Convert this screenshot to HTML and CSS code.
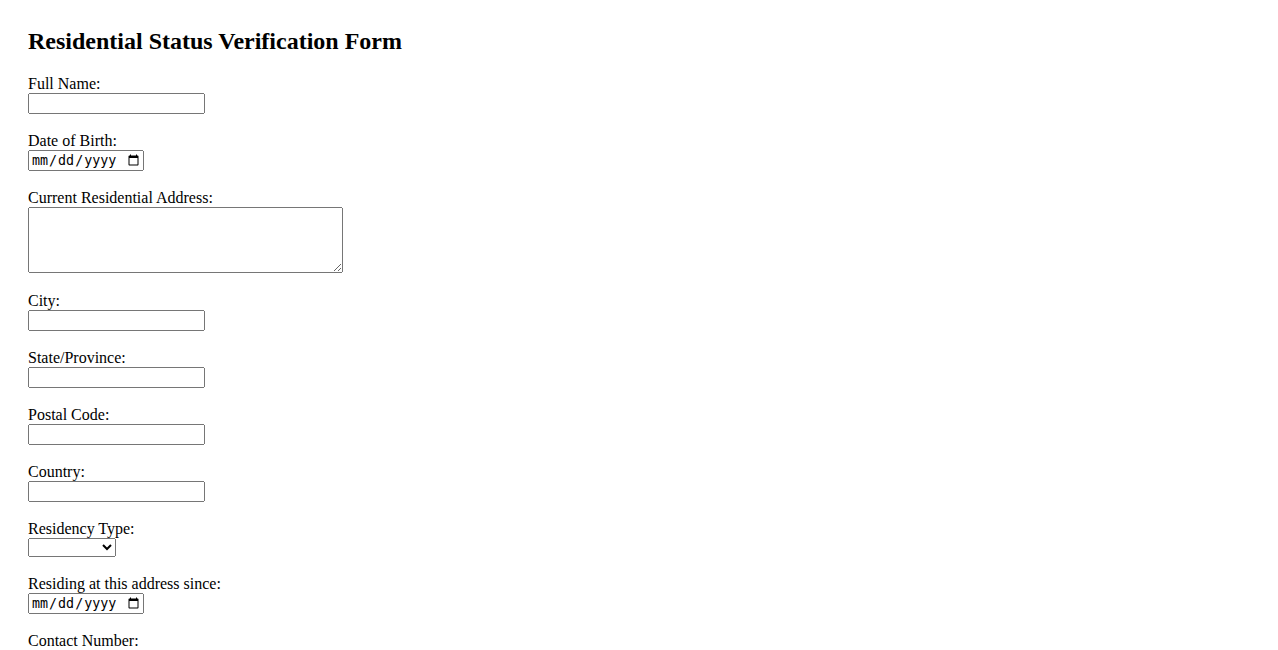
FILE: index.html
```html
<!DOCTYPE html>
<html lang="en">
<head>
<meta charset="utf-8">
<title>Residential Status Verification Form</title>
<link rel="stylesheet" href="styles.css">
</head>
<body>
<h2 class="title">Residential Status Verification Form</h2>
<form class="form">
<label for="name">Full Name:</label><br>
<input class="text" type="text" id="name" name="name"><br><br>
<label for="dob">Date of Birth:</label><br>
<input class="date" type="date" id="dob" name="dob"><br><br>
<label for="address">Current Residential Address:</label><br>
<textarea class="area" id="address" name="address" rows="4" cols="40"></textarea><br><br>
<label for="city">City:</label><br>
<input class="text" type="text" id="city" name="city"><br><br>
<label for="state">State/Province:</label><br>
<input class="text" type="text" id="state" name="state"><br><br>
<label for="postal">Postal Code:</label><br>
<input class="text" type="text" id="postal" name="postal"><br><br>
<label for="country">Country:</label><br>
<input class="text" type="text" id="country" name="country"><br><br>
<label for="type">Residency Type:</label><br>
<select id="type" name="type" class="select">
<option value=""></option>
</select><br><br>
<label for="since">Residing at this address since:</label><br>
<input class="date" type="date" id="since" name="since"><br><br>
<label for="phone">Contact Number:</label><br>
<input class="text" type="tel" id="phone" name="phone"><br><br>
</form>
</body>
</html>
```
FILE: styles.css
```css
body {
  margin: 0;
  padding: 28px;
  font-family: "Liberation Serif", "Times New Roman", serif;
}
.title {
  font-size: 24px;
  margin-top: 0;
}
.text {
  width: 177px;
  height: 21px;
  box-sizing: border-box;
}
.date {
  width: 116px;
  height: 21px;
  box-sizing: border-box;
}
.area {
  width: 315px;
  height: 66px;
  box-sizing: border-box;
  vertical-align: bottom;
  margin-bottom: 1px;
}
.select {
  width: 88px;
}
```
